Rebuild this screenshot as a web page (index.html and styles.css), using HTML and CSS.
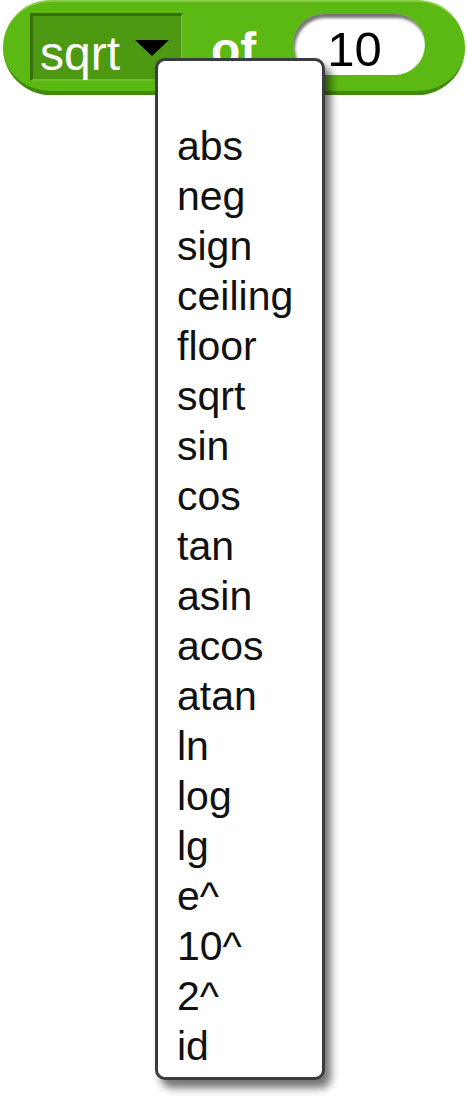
FILE: index.html
```html
<!DOCTYPE html>
<html>
<head>
<meta charset="utf-8">
<link rel="stylesheet" href="styles.css">
</head>
<body>
<div class="block">
  <div class="dropdown">
    <span class="dd-label">sqrt</span>
    <span class="dd-arrow"></span>
  </div>
  <span class="of">of</span>
  <div class="slot">10</div>
</div>
<div class="menu">
  <div class="item">abs</div>
  <div class="item">neg</div>
  <div class="item">sign</div>
  <div class="item">ceiling</div>
  <div class="item">floor</div>
  <div class="item">sqrt</div>
  <div class="item">sin</div>
  <div class="item">cos</div>
  <div class="item">tan</div>
  <div class="item">asin</div>
  <div class="item">acos</div>
  <div class="item">atan</div>
  <div class="item">ln</div>
  <div class="item">log</div>
  <div class="item">lg</div>
  <div class="item">e^</div>
  <div class="item">10^</div>
  <div class="item">2^</div>
  <div class="item">id</div>
</div>
</body>
</html>
```
FILE: styles.css
```css
html, body {
  margin: 0;
  padding: 0;
  background: #ffffff;
  width: 468px;
  height: 1099px;
  overflow: hidden;
  font-family: "Liberation Sans", Arial, sans-serif;
}

.block {
  box-sizing: border-box;
  margin-left: 3px;
  width: 462px;
  height: 95px;
  background: #5cb813;
  border-radius: 48px;
  border-top: 2px solid #86cf45;
  border-bottom: 4px solid #3f8a0d;
  display: flex;
  align-items: flex-start;
  padding-left: 27px;
}

.dropdown {
  box-sizing: border-box;
  margin-top: 11px;
  width: 153px;
  height: 68px;
  background: #4d9a12;
  border-top: 3px solid #35700a;
  border-left: 3px solid #35700a;
  border-bottom: 2px solid #69c028;
  border-right: 2px solid #69c028;
  display: flex;
  align-items: flex-start;
  padding-top: 14px;
  padding-left: 7px;
}

.dd-label {
  color: #ffffff;
  font-size: 48px;
  line-height: 48px;
}

.dd-arrow {
  width: 0;
  height: 0;
  margin-left: 15px;
  margin-top: 10px;
  border-left: 17px solid transparent;
  border-right: 17px solid transparent;
  border-top: 16px solid #000000;
}

.of {
  color: #ffffff;
  font-weight: bold;
  font-size: 48px;
  line-height: 48px;
  margin-top: 24px;
  margin-left: 28px;
}

.slot {
  box-sizing: border-box;
  margin-top: 12px;
  margin-left: 37px;
  width: 132px;
  height: 61px;
  border-radius: 31px;
  background: #ffffff;
  box-shadow: inset 2px 4px 3px rgba(0, 0, 0, 0.55);
  color: #000000;
  font-size: 49px;
  line-height: 49px;
  padding-left: 34px;
  padding-top: 11px;
}

.menu {
  position: absolute;
  left: 155px;
  top: 58px;
  box-sizing: border-box;
  width: 170px;
  height: 1022px;
  background: #ffffff;
  border: 3px solid #3c3c3c;
  border-radius: 10px;
  box-shadow: 6px 8px 8px rgba(0, 0, 0, 0.55);
  padding: 60px 0 0 19px;
}

.item {
  font-size: 41px;
  line-height: 50px;
  height: 50px;
  color: #111111;
  white-space: nowrap;
}
```
